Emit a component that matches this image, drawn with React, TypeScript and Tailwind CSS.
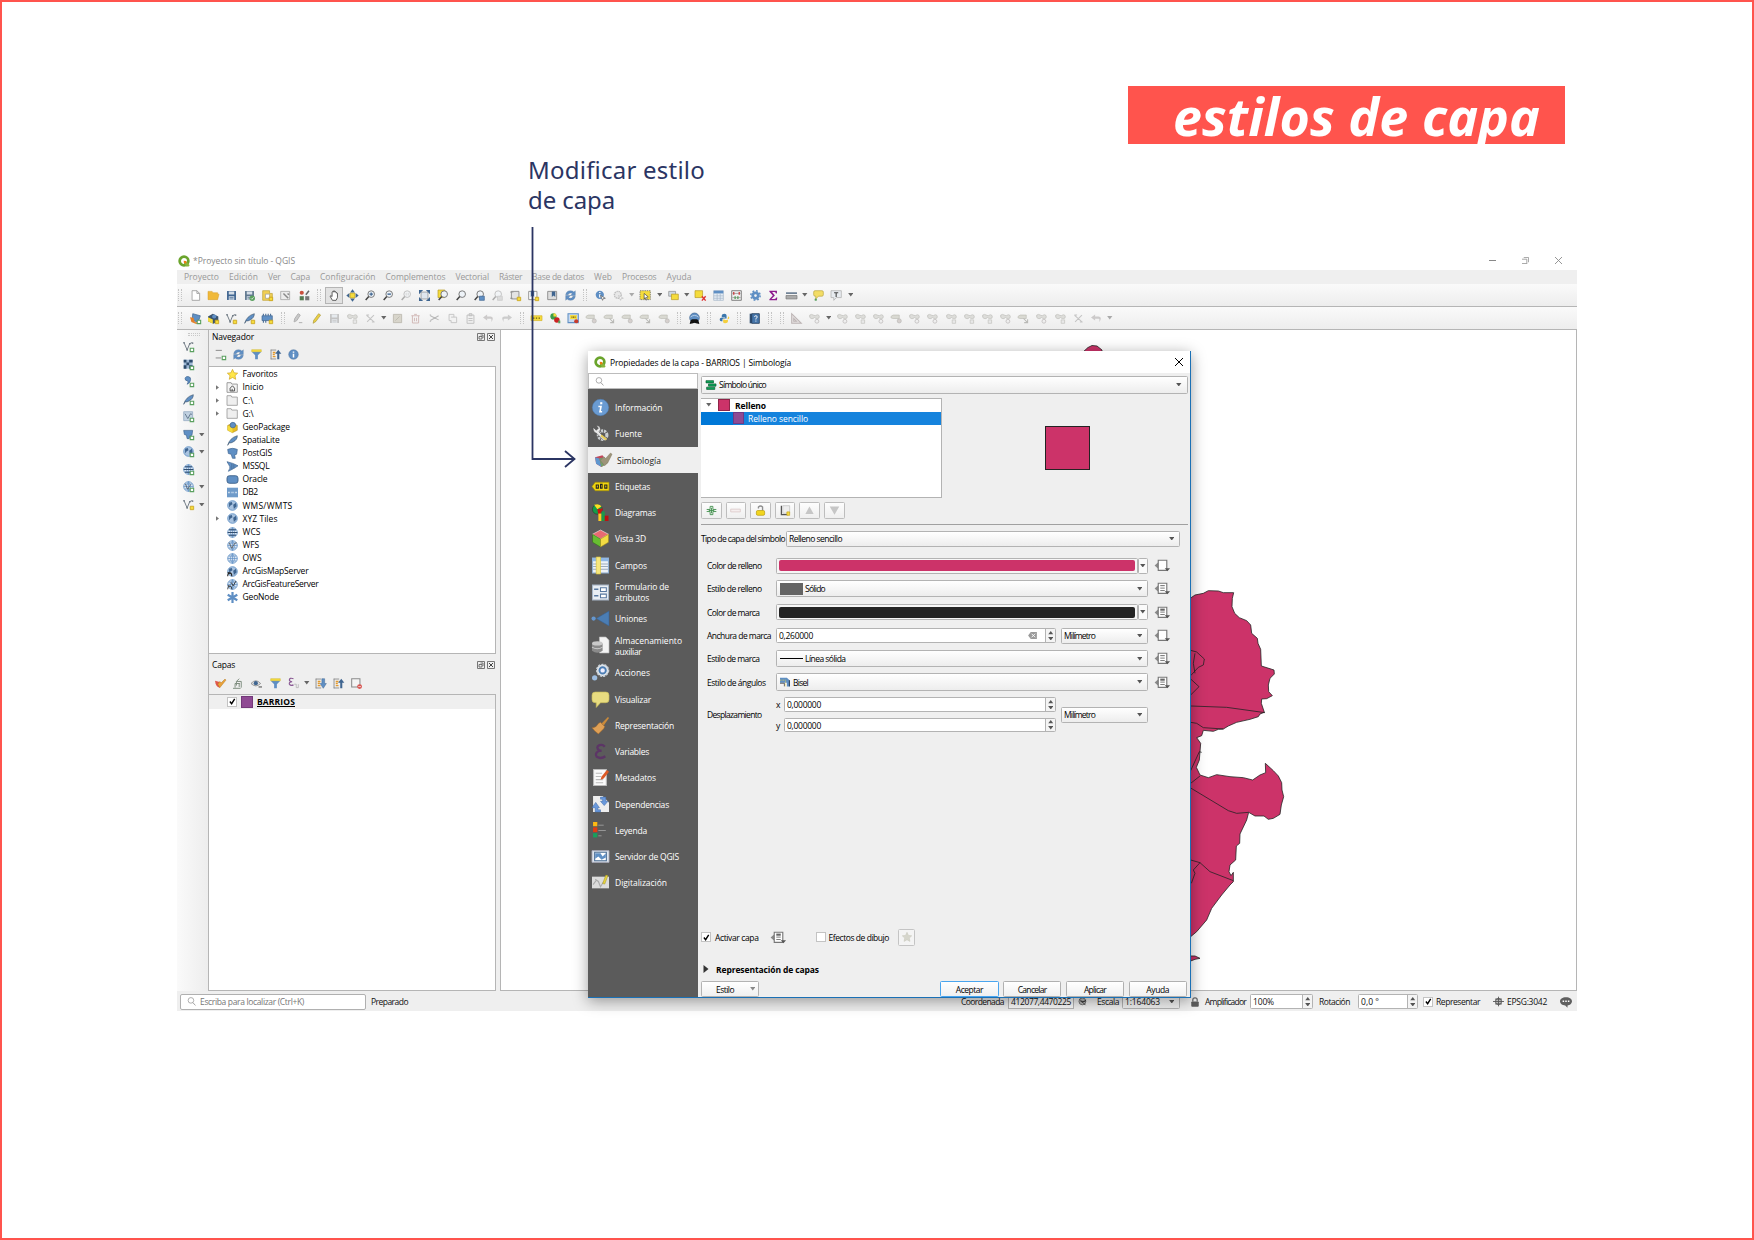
import { useLayoutEffect, useRef, useState, type ReactNode } from 'react';

/* Single-line label whose tracking is adjusted so it spans `w` pixels. */
function T({ w, c = '', children }: { w: number; c?: string; children: string }) {
  const ref = useRef<HTMLSpanElement>(null);
  const [ls, setLs] = useState(0);
  useLayoutEffect(() => {
    const el = ref.current;
    if (el) setLs((w - el.getBoundingClientRect().width) / children.length);
  }, []);
  return (
    <span ref={ref} className={'lbl inline-block shrink-0 whitespace-pre ' + c} style={{ letterSpacing: ls + 'px' }}>
      {children}
    </span>
  );
}

const B = '#5f8fc4';
const D = '#3f6590';
const Y = '#f5dc3c';
const G = '#5aa05f';
const K = '#8a8a8a';

const plus = <path d="M10.5 10.5h5v5h-5z" fill="#fff" stroke={G} strokeWidth="1.6" />;
const plusY = <path d="M10.5 10.5h5v5h-5z" fill={Y} stroke="#c9a31c" strokeWidth="1.2" />;
const lens = (
  <>
    <circle cx="9" cy="6" r="4.8" fill="#eef3f8" stroke="#777" strokeWidth="1.4" />
    <path d="M5.5 9.5L1 14.5" stroke="#444" strokeWidth="2.2" />
  </>
);
const vec = (
  <>
    <path d="M1.500 2.500L6 13L9.500 4.500Q11 1.500 14 3" fill="none" stroke="#66717c" strokeWidth="1.3" />
    <path d="M.5 1.500h2v2h-2zM5 12h2v2h-2zM9 3h2v2h-2zM13 2h2v2h-2z" fill="#66717c" />
  </>
);
const globe = (
  <>
    <circle cx="8" cy="8" r="7" fill="#a9c3e0" stroke={B} strokeWidth="1.2" />
    <path d="M3 4l4-1 1 3-3 2-2 3zM9 7l4-3 1 5-4 4z" fill={D} />
  </>
);
const grid = (
  <>
    <circle cx="8" cy="8" r="7" fill="#dbe6f2" stroke={B} strokeWidth="1.2" />
    <path d="M1 8h14M2.500 4.500h11M2.500 11.500h11M8 1v14M8 1Q2 8 8 15M8 1q6 7 0 14" fill="none" stroke={B} />
  </>
);
const tag = <path d="M0 5l3-2h9v5H3L0 7z" fill="#d9d9d2" stroke="#bdbdb6" />;
const blob = <path d="M1 3q3-2 5 0l3 1 3-1.500q3 0 3 3t-3 2.500q-3 0-4-1.500-2 2.500-5 1.500Q0 7 1 3z" fill="#dddddA" stroke="#bfbfbb" />;
const feather = <path d="M1 15Q4 4 15 1q0 6-6 9-3 2-6 1.500z" fill={B} stroke="#3b536c" strokeWidth=".9" />;
const disk = (c: string) => (
  <>
    <path d="M1.500 1.500h13v13h-13z" fill={c} />
    <path d="M4 2h8v4.500H4zM4 9h8v5.500H4z" fill="#d5dee7" />
    <path d="M5 11h6M5 13h6" stroke={c} />
  </>
);
const funnel = (
  <>
    <path d="M1 4h14L10 9v6H6V9z" fill={B} />
    <path d="M1 1h14v3H1z" fill={Y} stroke="#c7ab1f" strokeWidth=".6" />
  </>
);
const up = <path d="M10.500 15V7H7.500L12 1l4.500 6h-3v8z" fill={D} />;
const list = (
  <>
    <path d="M1 1.500h8M1 14.500h8M1.500 1v14" stroke={K} strokeWidth="1.300" fill="none" />
    <path d="M4 5h4M4 8h3M4 11h4" stroke="#e39a2e" strokeWidth="2" />
  </>
);
const qlogo = (
  <>
    <circle cx="8" cy="8" r="5.800" fill="none" stroke="#6aa42c" strokeWidth="3.600" />
    <path d="M8 8l3 .2 4.500 5.500-1.300 1.600-3.300.1L8 11z" fill="#8ab53c" />
    <path d="M7.600 7.600l3.200.3.500 2.600-1.300.8-2.100-.8z" fill="#ee7913" />
  </>
);
const override = (kind: number) => (
  <>
    <path d="M-.5 8L4 4v8z" fill={K} />
    <path d="M4 1.500h10.500V14H4z" fill="#fff" stroke="#777" strokeWidth="1.400" />
    {kind > 0 && <path d="M6.500 7.500H12M6.500 10.500H12" stroke="#777" strokeWidth="1.200" />}
    {kind > 0 && <path d="M6.500 4.500H12" stroke="#666" strokeWidth={kind > 1 ? '2.600' : '1.200'} />}
    <path d="M12 11.500h6.500l-3.200 3.500z" fill="#555" />
  </>
);

const ICONS: Record<string, ReactNode> = {
  page: <path d="M3 1h7l4 4v10H3zM10 1v4h4" fill="#fff" stroke="#999" strokeWidth="1.200" />,
  folder: <path d="M0 2h6l1 2h7v2h2l-2 8H0z" fill="#f0b93a" stroke="#d69a25" strokeWidth=".7" />,
  save: disk(D),
  saveas: <>{disk('#60788f')}<circle cx="12" cy="12" r="4" fill={G} /><path d="M10 12l1.500 1.500L14 10.500" stroke="#fff" fill="none" /></>,
  layout: <><path d="M1 1h10v4h4v10H1z" fill="#f1cf55" stroke="#bda032" /><path d="M5 6h6v6H5z" fill="#fff" stroke="#999" />{plusY}</>,
  manager: <><path d="M1 2h13v12H1z" fill="#ececec" stroke="#999" /><path d="M5 5l7 7M11 5l2 2" stroke={K} strokeWidth="2.200" /></>,
  style: <><circle cx="4" cy="4" r="3" fill="#c94f3d" /><path d="M1 9h6v6H1z" fill="#557a52" /><path d="M14.500 1L10 7" stroke="#666" strokeWidth="2.200" /><path d="M9 9h6v6H9z" fill="#777" /></>,
  hand: <path d="M5 15L1.500 9q1-1.500 3 .5V3q1-1.500 1.800 0V1.500q1-1 2 0V3q1-1.200 2 0v1.500q1.300-1 2 .2V11l-2 4z" fill="#fff" stroke="#222" />,
  pan: <><path d="M8-1l3.500 4.500h-7zM8 17l3.500-4.500h-7zM-1 8l4.500-3.500v7zM17 8l-4.500-3.500v7z" fill={D} /><path d="M4.500 4.500h7v7h-7z" fill={Y} stroke="#b89b20" /></>,
  zin: <>{lens}<path d="M9 3.500v5M6.500 6h5" stroke={D} strokeWidth="1.800" /></>,
  zout: <>{lens}<path d="M6.500 6h5" stroke={D} strokeWidth="2" /></>,
  zgray: <g opacity=".4">{lens}<path d="M7.500 4v4M10.500 4v4" stroke={K} /></g>,
  extent: <><path d="M3 3h10v10H3z" fill="#dfe6ee" stroke={K} /><path d="M0 0h6L0 6zM16 0v6l-6-6zM0 16v-6l6 6zM16 16h-6l6-6z" fill={D} /></>,
  zsel: <><path d="M0 0h10v11H0z" fill={Y} stroke="#b89b20" />{lens}</>,
  zlayer: lens,
  zlast: <>{lens}<path d="M8 9h7v6H8z" fill={B} stroke={D} /></>,
  znext: <g opacity=".4">{lens}<path d="M8 9h7v6H8z" fill="#bbb" stroke={K} /></g>,
  newmap: <><path d="M2 2h11v11H2z" fill="#e4e4e4" stroke={K} strokeWidth="1.300" /><path d="M0 3h5M0 12h4" stroke={K} />{plusY}</>,
  bookm: <><path d="M1 2h12v12H1z" fill="#fff" stroke={K} strokeWidth="1.300" /><path d="M4 1h5v9l-2.500-2L4 10z" fill={D} />{plusY}</>,
  books: <><path d="M1 2h13v12H1z" fill="#ddd" stroke={K} strokeWidth="1.300" /><path d="M7 2h5v8l-2.500-2L7 10z" fill={D} /></>,
  refresh: <><path d="M1 7q1-6 7-6 3 0 5 2l2-2v7H8l3-3Q6 3 4.500 7zM15 9q-1 6-7 6-3 0-5-2l-2 2V8h7l-3 3q5 3 6.500-2z" fill={B} stroke={D} strokeWidth=".4" /></>,
  identify: <><circle cx="7" cy="7" r="6" fill={B} /><path d="M7 3v1.500M7 6v5" stroke="#fff" strokeWidth="2" /><path d="M8 8l7 4-3 .5L11 15z" fill="#fff" stroke="#555" /></>,
  action: <g opacity=".5"><circle cx="7" cy="7" r="5" fill="#ddd" stroke={K} strokeWidth="2" strokeDasharray="2 1" /><path d="M8 8l7 4-3 .5L11 15z" fill="#fff" stroke={K} /></g>,
  select: <><path d="M0 1h15v13H0z" fill={Y} stroke="#777" strokeDasharray="2 1.300" strokeWidth="1.300" /><path d="M6 5l6 5-2.500.5 1 3.500-2 .5L7.500 11 6 13z" fill="#fff" stroke="#444" /></>,
  selval: <><path d="M1 2h10v7H1z" fill="#cfd9e4" stroke={K} /><path d="M5 6h10v8H5z" fill={Y} stroke="#b89b20" /></>,
  desel: <><path d="M0 1h11v10H0z" fill={Y} stroke="#b89b20" /><path d="M10 9l5.500 6.500M15.500 9L10 15.500" stroke="#d33" strokeWidth="2" /></>,
  table: <><path d="M1 1h14v14H1z" fill="#e6edf5" stroke="#a3b5c8" /><path d="M1 1h14v4H1z" fill={B} /><path d="M1 8.500h14M1 12h14M6 5v10M10.500 5v10" stroke="#a3b5c8" /></>,
  abacus: <><path d="M1 1h14v14H1z" fill="#eee" stroke="#777" strokeWidth="1.300" /><path d="M2 5h12M2 11h12" stroke={K} /><path d="M3 3h2v4H3zM11 3h2v4h-2z" fill="#c44" /><path d="M5 9h2v4H5zM9 9h2v4H9z" fill={G} /></>,
  gear: <><circle cx="8" cy="8" r="4" fill="none" stroke={B} strokeWidth="4" /><circle cx="8" cy="8" r="6.800" fill="none" stroke={B} strokeWidth="2.200" strokeDasharray="2.600 2.740" /></>,
  sigma: <path d="M2 1h11v4h-1.500Q11 3 9 3H6l4 5-5 5h4.500q2 0 2.500-2h1.500L13 15H2v-1.500L7 8 2 2.500z" fill="#8d1a8d" />,
  measure: <><path d="M0 4.500h16" stroke="#3a536f" strokeWidth="1.800" /><path d="M0 8h16v5H0z" fill="#aaa" stroke="#777" /></>,
  tip: <><path d="M3 1h10q2 0 2 2v4q0 2-2 2H8l-4 4V9H3Q1 9 1 7V3q0-2 2-2z" fill="#f3dd67" stroke="#bba640" /><circle cx="4" cy="14" r="1.700" fill={G} /></>,
  text: <><path d="M0 1h15v10H8l-4 4v-4H0z" fill="#e7ebef" stroke="#aaa" /><path d="M4.500 4h6M7.500 4v6" stroke="#444" strokeWidth="1.600" /></>,
  src: <><path d="M4 1l11 3-3 9-9-2z" fill={B} stroke={D} /><path d="M0 6l5 1 2 6 6 1-4 2-7-3z" fill="#e2812b" />{plus}</>,
  gpkg: <><path d="M1 5l7-3.500L15 5v7l-7 3.500L1 12z" fill="#e7bc22" stroke="#a58312" strokeWidth=".7" /><path d="M1 5l7 3.500v7L1 12z" fill={Y} /><circle cx="8.500" cy="4.500" r="4" fill={B} stroke={D} /></>,
  gpkgadd: <><path d="M0 5l7-4 8 4v7l-7 3.500L0 12z" fill="#3a536f" /><path d="M0 6l7 3.500v6L0 12z" fill={Y} /><circle cx="9" cy="5" r="3" fill={B} />{plusY}</>,
  vecY: <>{vec}{plusY}</>,
  vecG: <>{vec}{plus}</>,
  featY: <>{feather}{plusY}</>,
  featG: <>{feather}{plus}</>,
  feather,
  chip: <><path d="M0 4h15v7H0z" fill={B} stroke={D} /><path d="M2 1v3M5.500 1v3M9 1v3M12.500 1v3M2 11v3M5.500 11v3" stroke={D} strokeWidth="1.500" />{plusY}</>,
  pens: <path d="M3 13l1-5 5-7 3 2-5 8zM10 14h5" fill="#c8c8c8" stroke="#b0b0b0" strokeWidth="1.400" />,
  pencil: <path d="M3 15l1-4.500L11 1l3 2-7 9.500z" fill="#e9cf45" stroke="#a08b28" strokeWidth=".8" />,
  gsave: <g opacity=".45">{disk(K)}</g>,
  gblob: <>{blob}<path d="M9 10h5v5H9z" fill="#e8e8e8" stroke="#c2c2be" /></>,
  gtag: <>{tag}<circle cx="12" cy="11.500" r="3" fill="#d6d0ce" stroke="#b9b9b6" /></>,
  gtag2: <>{tag}<path d="M8 8l6 6M14 9v5H9" stroke="#b9b9b6" strokeWidth="1.500" fill="none" /></>,
  gblob2: <>{blob}<circle cx="11.500" cy="12" r="2.800" fill="#eee" stroke="#b9b4b4" /></>,
  gcross: <path d="M2 3l11 10M13 3L3 13M2 3h4M10 13h4" stroke="#c4c4c4" strokeWidth="1.500" fill="none" />,
  gedit: <path d="M2 2h12v12H2zM5 11l6-6" fill="#d8d5cb" stroke="#bdbab0" strokeWidth="1.300" />,
  trash: <path d="M2 4h12M6 2h4M3.500 4v10.500h9V4M6.500 7v5M9.500 7v5" fill="none" stroke="#cfb4b2" strokeWidth="1.300" />,
  cut: <path d="M2 4l12 6M2 11l12-7M1 3h2M1 12h2" stroke="#b9b9b9" strokeWidth="1.500" fill="none" />,
  copy: <path d="M3 2h7v4h4v8H6v-3H3zM6 6h4" fill="#f2f2f2" stroke="#c2c2c2" strokeWidth="1.300" />,
  paste: <path d="M3 3h10v12H3zM6 1h4v3H6zM5 8h6M5 11h6" fill="#f0f0f0" stroke="#bdbdbd" strokeWidth="1.300" />,
  undo: <path d="M6 2L0 6.500 6 11V8.500h5q2 0 1 5 5-8-1-8.500H6z" fill="#cccaca" />,
  redo: <path d="M10 2l6 4.500-6 4.500V8.500H5q-2 0-1 5Q-1 5.500 5 5h5z" fill="#ccc" />,
  abc: <><path d="M0 4h16v7H0z" fill={Y} stroke="#d6b32a" /><path d="M3 7.500h2M7 7.500h2M11 7.500h2" stroke="#6c5a10" strokeWidth="2" /></>,
  diag: <><circle cx="5" cy="5" r="4.500" fill="#3a9d4a" /><path d="M5 5V.5A4.500 4.500 0 019.500 5z" fill={Y} /><circle cx="10" cy="10" r="4" fill="#c22" /><path d="M12 11h3v4h-3z" fill={G} /></>,
  abcmap: <><path d="M0 1h15v13H0z" fill="#c8daf0" stroke={B} strokeWidth="1.500" /><path d="M3 3h10v6H3z" fill={Y} /><path d="M5 6h6" stroke="#6c5a10" strokeWidth="1.500" strokeDasharray="1.500 .8" /><circle cx="12" cy="12" r="3" fill="#c93a2b" /></>,
  bino: <><circle cx="8" cy="7" r="7" fill={B} stroke={D} /><path d="M2 6q6-5 12 0" stroke="#dbe6f2" fill="none" /><path d="M1 16q1-7 4-7h6q3 0 4 7l-5-1q-2-2-4 0z" fill="#111" /></>,
  python: <><path d="M8 1Q4 1 4 3.500V6h5v1H3Q1 7 1 9.500T3 12h2V9.500Q5 8 7 8h4V3.500Q11 1 8 1z" fill="#3b77ad" /><path d="M9 15q4 0 4-2.500V10H8V9h5q2 0 2-2t-2-2v2q0 2-2 2H7q-1 0-1 1.500V13q0 2 3 2z" fill="#f4cf3e" /></>,
  help: <><path d="M1 1h14v14H1z" fill="#2f4d70" /><path d="M4 1h11v14H4z" fill="#4676ab" stroke="#243c58" /><path d="M8 5.500q0-1.500 2-1.500t2 2q0 1-2 2v1.500M10 11v1.500" stroke="#fff" strokeWidth="1.300" fill="none" /></>,
  tri: <path d="M1 1v14h14zM4 8v4h4z" fill="#e4e0e0" stroke="#bcb4b4" strokeWidth="1.500" />,
  raster: <><path d="M1 1h13v13H1z" fill="#9fb9d6" /><path d="M1 1h4v4H1zM9 1h5v4H9zM5 5h4v4H5zM1 9h4v5H1zM9 9h5v5H9z" fill="#2c4a6b" />{plus}</>,
  comma: <><path d="M5 1q6-1 6 4 0 5-5 7 2-3 1-5-4 0-4-3 0-2 2-3z" fill={B} stroke={D} />{plus}</>,
  vlayer: <><path d="M1 1h13v13H1z" fill="#c2d2e2" stroke="#8ea5bd" /><path d="M3 4l4 7 4-7 2 1" stroke="#5c7186" fill="none" strokeWidth="1.300" />{plus}</>,
  pgadd: <><path d="M1 2h13l-1 7-3 1-1 4H6L5 9 2 8z" fill={B} stroke={D} />{plus}</>,
  globeadd: <>{globe}{plus}</>,
  gridadd: <>{grid}<path d="M1 8h14M3 4h10M3 12h10" stroke="#314e70" strokeWidth="1.600" />{plus}</>,
  wfsadd: <>{grid}<path d="M3 4l4 8 4-7" stroke="#555" fill="none" />{plus}</>,
  star: <path d="M8 .5l2.300 5 5.200.6-3.900 3.600 1.100 5.300L8 12.300 3.300 15l1.100-5.300L.5 6.100l5.200-.6z" fill="#ffe649" stroke="#cfa522" />,
  home: <><path d="M0 1h6l1 2h8v12H0z" fill="#f4f4f4" stroke={K} strokeWidth="1.200" /><path d="M8 5.500L4.500 9v4h6.500V9z" fill="none" stroke="#444" strokeWidth="1.300" /><path d="M7.500 10v3" stroke="#444" strokeWidth="1.300" /></>,
  dir: <path d="M0 1h6l1 2h8v12H0z" fill="#efefef" stroke="#999" strokeWidth="1.200" />,
  pg: <path d="M1 2Q8-1 15 2l-1 7-3 1 1 5H8L6 9 2 8z" fill={B} stroke={D} />,
  ms: <><path d="M0 1q9 2 16 6Q10 11 2 15q3-5 2-7T0 1z" fill={B} stroke={D} /><path d="M7 4v8M10 5v6" stroke={D} fill="none" /></>,
  oracle: <rect x="0" y="2.500" width="16" height="11" rx="3.500" fill={B} stroke="#3c5f88" strokeWidth="1.300" />,
  db2: <><path d="M0 1h16v14H0z" fill="#6f9bca" /><path d="M1.500 8h3M6.500 8h3M11.500 8h3" stroke="#dce8f5" strokeWidth="2.500" strokeDasharray="1.200 .6" /></>,
  globe,
  grid,
  wcs: <>{grid}<path d="M1 8h14M3 4h10M3 12h10" stroke="#314e70" strokeWidth="1.800" /></>,
  wfs: <>{grid}<path d="M3 4l4 8 4-7 3-1" stroke="#666" fill="none" strokeWidth="1.300" /></>,
  arc: <>{globe}<path d="M1 15q0-5 3-5t3 5M1 9l3 2" stroke="#222" fill="none" strokeWidth="1.500" /></>,
  arcf: <>{grid}<path d="M1 15q0-5 3-5t3 5M1 9l3 2M6 5l3 5 4-7" stroke="#333" fill="none" strokeWidth="1.300" /></>,
  node: <path d="M8 0v16M1 4l14 8M15 4L1 12" stroke={B} strokeWidth="3.200" />,
  addlay: <><path d="M1 2h9M1 13h8" stroke={K} strokeWidth="1.400" />{plus}</>,
  funnel,
  tree: <>{list}{up}</>,
  expand: <>{list}<path d="M10 1h4v7h2.500L12 15 7.500 8H10z" fill={B} stroke={D} strokeWidth=".7" /></>,
  info: <><circle cx="8" cy="8" r="7" fill={B} stroke={D} strokeWidth=".6" /><path d="M8 3.500v2M8 7v5.500" stroke="#fff" strokeWidth="2.200" /></>,
  brush: <><path d="M0 4l8 2-1 8Q1 13 0 4z" fill="#e0574b" /><path d="M4 9l3 5L16 3l-1.500-1.500L9 7 7 5z" fill="#e9a23a" stroke="#a8701c" strokeWidth=".6" /></>,
  group: <path d="M0 15h11M3 14V8h7M5 11V5h7v9M5 5l4-4M9 8v5" fill="none" stroke="#7d8b7e" strokeWidth="1.400" />,
  eye: <><path d="M0 8q7-8 14 0-7 7-14 0z" fill="#ddd" stroke="#777" /><circle cx="7" cy="7.500" r="3" fill={D} /><path d="M11 13h5" stroke="#777" strokeWidth="2" /></>,
  eps: <><path d="M8 1Q2-1 2 3q0 2 4 2.500Q1 6 2 9q2 3 6 1" fill="none" stroke="#8a5a94" strokeWidth="1.700" /><path d="M9 9h3v5h3v-5" stroke="#aaa" fill="none" /></>,
  remove: <><path d="M1 1h12v12H1z" fill="#f4f4f4" stroke={K} strokeWidth="1.500" /><circle cx="12.500" cy="12.500" r="3.500" fill="#d9534f" /><path d="M10.500 12.500h4" stroke="#fff" /></>,
  search: <><circle cx="7" cy="6" r="5" fill="none" stroke={K} strokeWidth="1.200" /><path d="M10.500 10L15 15" stroke={K} strokeWidth="1.400" /></>,
  qgis: qlogo,
  bigInfo: <><circle cx="8" cy="8" r="7.700" fill="#6a9bd2" stroke="#4e7fb8" strokeWidth=".5" /><path d="M8.700 3v2" stroke="#fff" strokeWidth="2" /><path d="M6 7h2.500l-1 5h2" fill="none" stroke="#fff" strokeWidth="1.500" /></>,
  wrench: <><circle cx="10" cy="9.500" r="4" fill="none" stroke="#c9cdd0" strokeWidth="3" strokeDasharray="2 .8" /><path d="M1 2l3 3 2-2L4 .5q4 0 4 4l-1.500 2L13 13l-1.500 2L4.500 8Q1 7 1 2z" fill="#e8e8e8" stroke="#444" strokeWidth=".5" /><path d="M9 9l5 4-1 1.500-5-4z" fill="#e5cb57" /></>,
  symb: <><path d="M1 5l7-2 5 7-6 4-5-3z" fill="#c3485a" /><path d="M1 5l4 1 2 8-5-3z" fill="#5f97cf" /><path d="M5 6l5-1 3 5-6 4z" fill="#72a16b" /><path d="M6 8l4 5 3-3 4-8-1.500-1-4.500 5-2-1.500z" fill="#9d9479" stroke="#7b735d" strokeWidth=".4" /></>,
  label: <><path d="M0 8l3-4h13v8H3z" fill="#f2d60f" stroke="#a08c00" strokeWidth=".6" /><path d="M4 6.500h2v3H4zM8 6h1.500v3.500H8zM12 6.500h2v3h-2z" fill="none" stroke="#222" /></>,
  bigDiag: <><circle cx="5" cy="5" r="4.600" fill="#149c4a" stroke="#222" strokeWidth=".4" /><path d="M5 5L2 .8Q6-1 9 2z" fill="#ffdd22" /><path d="M5 5l5-1q0 4-4 6z" fill="#c11" /><path d="M6 9h3v7H6z" fill="#fc2" /><path d="M9 7h3v9H9z" fill="#1a9b49" /><path d="M12 11h3.500v5H12z" fill="#b11" /></>,
  cube: <><path d="M8 0l7.500 4L8 8.500.5 4z" fill="#e96a72" stroke="#fff" strokeWidth=".5" /><path d="M.5 4L8 8.500V16L.5 11.500z" fill="#68bd32" stroke="#2d6a14" strokeWidth=".5" /><path d="M15.500 4L8 8.500V16l7.500-4.500z" fill="#f4dc43" stroke="#a08e1b" strokeWidth=".5" /></>,
  fields: <><path d="M.5 1h15v14H.5z" fill="#eef3f8" stroke="#8fb0d4" /><path d="M.5 1h15v3H.5z" fill="#8fb8e6" /><path d="M1 6.500h14M1 9h14M1 11.500h14" stroke="#9aabbc" /><path d="M4 0h4v16H4z" fill="#f7e77c" stroke="#d8c23a" strokeWidth=".6" /></>,
  form: <><path d="M.5 1h15v14H.5z" fill="#e9eef4" stroke="#a7b6c8" /><path d="M8 3.500h5.500V7H8zM8 9.500h5.500V13H8z" fill="#fff" stroke="#5878a0" /><path d="M2 5h4M2 11h4" stroke="#5878a0" strokeWidth="1.400" /></>,
  join: <><circle cx="1.500" cy="8" r="2" fill="#6597cf" /><path d="M4 8L16 1v14z" fill="#4b7db3" stroke="#356194" strokeWidth=".5" /></>,
  aux: <><path d="M7 0h6l3 3v12H7z" fill="#f4f4f4" stroke="#bbb" strokeWidth=".6" /><path d="M0 6v7q5 3.500 10 0V6z" fill="#8a8a8a" /><ellipse cx="5" cy="6" rx="5" ry="2" fill="#c9c9c9" /><path d="M0 9.500q5 3 10 0" stroke="#ccc" fill="none" /></>,
  actions: <><circle cx="10" cy="6" r="5.500" fill="#e6eaee" stroke="#c9d0d7" strokeWidth="1.500" strokeDasharray="2 1" /><circle cx="10" cy="6" r="3" fill="#eef" stroke="#4b7db3" strokeWidth="1.800" /><circle cx="2.500" cy="13" r="2.500" fill="#9dbde0" /></>,
  bubble: <path d="M3 1h10q3 0 3 3v4q0 3-3 3H8l-4 4.500V11H3Q0 11 0 8V4q0-3 3-3z" fill="#e8dc80" stroke="#c8bb58" strokeWidth=".6" />,
  broom: <><path d="M15 0l1 1-5 7-2-2z" fill="#c98a3b" /><path d="M8 5l4 4-1 2-5 5Q2 13 0 10q4 0 6-4z" fill="#dfa056" stroke="#9c6526" strokeWidth=".5" /></>,
  varE: <path d="M12 3.500Q10 1 7 2 3 4 7 7.300h2H7Q2 9.500 4.500 13q4 2.500 8-.5" fill="none" stroke="#5c3566" strokeWidth="2.200" />,
  meta: <><path d="M1.500.5h12v15h-12z" fill="#fafafa" stroke="#bbb" /><path d="M3.500 4h6M3.500 7h5M3.500 10h7M3.500 13h7" stroke="#bbb" /><path d="M8 10l1-3 5-6 2 1.500-5 6.500z" fill="#dd5a26" /></>,
  deps: <><path d="M1 0h9l6 6v9H1z" fill="#eee" /><path d="M8 1h5v4h2l-3.500 4L8 5h2V3H8zM8 15H3v-4H0l3.500-5L7 11H5.500v2H8z" fill="#6a99dc" stroke="#3e6aa8" strokeWidth=".5" /></>,
  legend: <><path d="M1 0h4v4H1z" fill="#fdb913" /><path d="M1 5h4v4.500H1z" fill="#e03c14" /><path d="M1 10.500h4v4H1z" fill="#17a05c" /><path d="M6 3h5M6 8h7M6 13h3" stroke="#999" strokeWidth=".9" /></>,
  server: <><path d="M0 2.500h16v11H0z" fill="#dfe6ee" stroke="#aab" strokeWidth=".8" /><path d="M2.500 4h11v8h-11z" fill="#fff" stroke="#4a6c93" /><path d="M3 5h5l2 3 3-3v4l-4 2-3-3-3 2z" fill="#5f8fc4" /></>,
  digit: <><path d="M0 2.500h16v11H0z" fill="#dcdcdc" /><path d="M3 5l3 2 2 5 3-5M1 10l3-4" stroke="#aaa" fill="none" /><path d="M10 9l3-8 2 .5-3 8z" fill="#e6d33c" stroke="#94861e" strokeWidth=".4" /></>,
  single: <path d="M0 1h12v3.600H0zM4 6.200h12v3.600H4zM1 11.400h13V15H1z" fill="#0fa558" stroke="#0a5c33" strokeWidth="1.100" />,
  addG: <path d="M1 6.500h5M1 9.500h5M6 6.500V2h4v4.500h5M6 9.500V14h4V9.500h5M8 4v8M4 8h8" fill="none" stroke="#3f8f4b" strokeWidth="1.300" />,
  minusG: <path d="M1 6h14v4H1z" fill="#f5eeee" stroke="#dcc9c9" strokeWidth="1.200" />,
  lockY: <><path d="M5 5V3q3-3 6 0v5" fill="none" stroke="#8f8f8f" strokeWidth="2" /><rect x="2" y="8" width="12" height="7" rx="2" fill="#f2d51e" stroke="#b79b0c" /></>,
  dup: <><path d="M2 1v13h9" fill="none" stroke="#555" strokeWidth="1.800" /><path d="M4 1h10v11H4z" fill="#eee" stroke="#aaa" strokeWidth=".7" /><path d="M10 10h4v5h-4z" fill={Y} stroke="#c9a31c" /></>,
  upG: <path d="M8 2l6 11H2z" fill="#c6c6c6" />,
  downG: <path d="M8 14L1 2h14z" fill="#c6c6c6" />,
  bevel: <><path d="M0 1h11l5 5v9h-5V9H0z" fill="#5f8fc4" /><path d="M0 5h9v10" fill="none" stroke={Y} strokeDasharray="1.500 1" /><path d="M0 10h7v5M15 5v10" fill="none" stroke="#111" /></>,
  starG: <path d="M8 .5l2.300 5 5.200.6-3.900 3.600 1.100 5.300L8 12.300 3.300 15l1.100-5.300L.5 6.100l5.200-.6z" fill="#d6d6cc" stroke="#cacabf" />,
  mapCoord: <><circle cx="7" cy="7" r="5.500" fill="#bbb" stroke="#444" /><path d="M3 4l9 9M6 9l7-4M4 7h8" stroke="#333" strokeWidth="1.300" /></>,
  padlock: <><path d="M4.500 7V4.500q0-3 3.500-3t3.500 3V7" fill="none" stroke="#666" strokeWidth="2" /><rect x="2" y="7" width="12" height="8.500" rx="1.500" fill="#5d5d5d" /></>,
  crs: <><circle cx="8" cy="8" r="4.500" fill="#bbb" stroke="#555" strokeWidth="1.300" /><path d="M0 8h16M8 1v14M3 4.500h10M3 11.500h10" stroke="#555" strokeWidth="1.300" /></>,
  msg: <><path d="M8 1.500c5 0 8 2.500 8 5.500s-3 5.500-6 5.500L10 15.500 7 12.500C3 12.500 0 10 0 7s3-5.500 8-5.500z" fill="#5f5f5f" /><path d="M3.500 7h2M7 7h2M10.500 7h2" stroke="#fff" strokeWidth="1.700" /></>,
  ov0: override(0),
  ov1: override(1),
  ov2: override(2),
};

function Ic({ n, c = 'size-3' }: { n: string; c?: string }) {
  return (
    <svg viewBox="0 0 16 16" className={'block shrink-0 overflow-visible ' + c}>
      {ICONS[n]}
    </svg>
  );
}

const Arrow = ({ c = 'text-[#666]' }: { c?: string }) => (
  <svg viewBox="0 0 6 4" className={'block h-[3.500px] w-[5.500px] shrink-0 ' + c}>
    <path d="M0 0h6L3 4z" fill="currentColor" />
  </svg>
);

function Bar({ items }: { items: string }) {
  return (
    <>
      {items.split(' ').map((k, i) => {
        if (k === '|')
          return (
            <span key={i} className="flex w-[12px] shrink-0 justify-center">
              <span className="h-[12px] w-[4px] border-x border-dotted border-[#c4c4c4]" />
            </span>
          );
        if (k === 'v' || k === 'V')
          return (
            <span key={i} className="flex w-[9.200px] shrink-0 justify-center">
              <Arrow c={k === 'v' ? 'text-[#666]' : 'text-[#aaa]'} />
            </span>
          );
        return (
          <span
            key={i}
            className={
              'flex h-[17px] w-[18.170px] shrink-0 items-center justify-center ' +
              (k === 'hand' ? 'border border-[#b5b5b5] bg-[#e2e2e2]' : '')
            }
          >
            <Ic n={k} c="size-[11px]" />
          </span>
        );
      })}
    </>
  );
}

const MENU: [string, number][] = [
  ['Proyecto', 35], ['Edición', 29], ['Ver', 12.500], ['Capa', 19.500], ['Configuración', 55.500], ['Complementos', 60],
  ['Vectorial', 33.500], ['Ráster', 23], ['Base de datos', 52], ['Web', 18], ['Procesos', 34.500], ['Ayuda', 25],
];

const TREE: [string, string, number, boolean?][] = [
  ['star', 'Favoritos', 35], ['home', 'Inicio', 21, true], ['dir', 'C:\\', 11, true], ['dir', 'G:\\', 11, true],
  ['gpkg', 'GeoPackage', 47.500], ['feather', 'SpatiaLite', 37], ['pg', 'PostGIS', 29.500], ['ms', 'MSSQL', 27],
  ['oracle', 'Oracle', 25], ['db2', 'DB2', 15], ['globe', 'WMS/WMTS', 50], ['globe', 'XYZ Tiles', 35, true],
  ['wcs', 'WCS', 18], ['wfs', 'WFS', 16.500], ['grid', 'OWS', 19], ['arc', 'ArcGisMapServer', 66],
  ['arcf', 'ArcGisFeatureServer', 76], ['node', 'GeoNode', 36.500],
];

const SIDE: [string, string, number, string?, number?][] = [
  ['bigInfo', 'Información', 47.500], ['wrench', 'Fuente', 27], ['symb', 'Simbología', 44], ['label', 'Etiquetas', 35],
  ['bigDiag', 'Diagramas', 41], ['cube', 'Vista 3D', 31], ['fields', 'Campos', 32], ['form', 'Formulario de', 54, 'atributos', 34],
  ['join', 'Uniones', 32], ['aux', 'Almacenamiento', 67, 'auxiliar', 26.500], ['actions', 'Acciones', 35],
  ['bubble', 'Visualizar', 36], ['broom', 'Representación', 59], ['varE', 'Variables', 34], ['meta', 'Metadatos', 41],
  ['deps', 'Dependencias', 54], ['legend', 'Leyenda', 32], ['server', 'Servidor de QGIS', 64], ['digit', 'Digitalización', 52],
];

const STRIP: [string, boolean][] = [
  ['vecG', false], ['raster', false], ['comma', false], ['featG', false], ['vlayer', false],
  ['pgadd', true], ['globeadd', true], ['gridadd', false], ['wfsadd', true], ['vecY', true],
];

const PanelHead = ({ title, w }: { title: string; w: number }) => (
  <div className="flex h-[14px] items-center pr-[5px] pl-[3px] text-black">
    <T w={w}>{title}</T>
    <span className="ml-auto flex gap-[2px]">
      {[0, 1].map((i) => (
        <svg key={i} viewBox="0 0 8 8" className="size-[8px]">
          <path d="M.5.5h7v7h-7z" fill="none" stroke="#777" />
          {i ? <path d="M2 2l4 4M6 2L2 6" stroke="#444" /> : <path d="M2 3.500h3V6H2zM3.500 2H6v3" stroke="#555" strokeWidth=".8" fill="none" />}
        </svg>
      ))}
    </span>
  </div>
);

const Check = ({ on, c = 'size-[10px]' }: { on?: boolean; c?: string }) => (
  <span className={'flex shrink-0 items-center justify-center border border-[#c3c3c3] bg-white ' + c}>
    {on && (
      <svg viewBox="0 0 8 8" className="size-[7px]">
        <path d="M1 4l2 2.500L6.500 1" fill="none" stroke="#000" strokeWidth="1.600" />
      </svg>
    )}
  </span>
);

const Combo = ({ c, children }: { c: string; children: ReactNode }) => (
  <span className={'flex shrink-0 items-center rounded-[1.500px] border border-[#b3b3b3] bg-linear-to-b from-white to-[#ededed] pr-[5px] ' + c}>
    {children}
    <span className="ml-auto"><Arrow c="text-[#555]" /></span>
  </span>
);

const Spin = ({ c, children }: { c: string; children: ReactNode }) => (
  <span className={'flex shrink-0 items-center rounded-[1.500px] border border-[#b3b3b3] bg-white pl-[2px] ' + c}>
    {children}
    <span className="flex h-full w-[10px] flex-col items-center justify-center gap-[2.500px] border-l border-[#b3b3b3] bg-[#f4f4f4]">
      <span className="rotate-180"><Arrow c="text-[#555]" /></span>
      <Arrow c="text-[#555]" />
    </span>
  </span>
);

const Row = ({ label, w, ov, children }: { label: string; w: number; ov?: string; children: ReactNode }) => (
  <div className="flex h-[23.300px] items-center pl-[6px]">
    <span className="w-[69px] shrink-0"><T w={w}>{label}</T></span>
    {children}
    {ov && <Ic n={ov} c="ml-[7px] size-[13px]" />}
  </div>
);

const ColorBtn = ({ c }: { c: string }) => (
  <>
    <span className="flex h-[16px] w-[362px] items-center rounded-[1.500px] border border-[#b3b3b3] bg-[#f6f6f6] px-[2px]">
      <span className={'h-[11px] w-full rounded-[2px] ' + c} />
    </span>
    <span className="flex h-[16px] w-[10px] items-center justify-center rounded-[1.500px] border border-[#b3b3b3] bg-[#fafafa]">
      <Arrow c="text-[#555]" />
    </span>
  </>
);

const Btn = ({ w, c = 'border-[#b0b0b0]', children }: { w: number; c?: string; children: string }) => (
  <span className={'flex h-[16px] w-[58.500px] items-center justify-center rounded-[1.500px] border bg-linear-to-b from-white to-[#f0f0f0] ' + c}>
    <T w={w}>{children}</T>
  </span>
);

function Dialog() {
  return (
    <div className="absolute top-[21px] left-[87px] flex h-[647px] w-[603px] flex-col border-r border-b border-[#1a70b5] bg-[#efefef] text-black shadow-[0_3px_14px_rgba(0,0,0,0.38)] [&_.lbl]:pt-[1.500px]">
      <div className="flex h-[22px] shrink-0 items-center bg-white pr-[7px] pl-[6px]">
        <Ic n="qgis" />
        <T w={181} c="ml-[4px]">Propiedades de la capa - BARRIOS | Simbología</T>
        <svg viewBox="0 0 8 8" className="ml-auto size-2"><path d="M0 0l8 8M8 0L0 8" stroke="#000" /></svg>
      </div>
      <div className="flex min-h-0 flex-1">
        <div className="flex w-[110px] shrink-0 flex-col bg-[#5b5b5b] text-white">
          <div className="mb-[5.500px] flex h-[16px] shrink-0 items-center border border-[#bcbcbc] bg-white pl-[6px]">
            <Ic n="search" c="size-[9px]" />
          </div>
          {SIDE.map(([ic, a, w, b, w2]) => (
            <div
              key={a}
              className={
                'flex shrink-0 items-center ' +
                (b ? 'h-[27.600px] ' : 'h-[26.250px] ') +
                (ic === 'symb' ? 'bg-[#efefef] pl-[6px] text-[#222]' : 'pl-[4px]')
              }
            >
              <Ic n={ic} c="size-[17px]" />
              <span className="ml-[6px] flex flex-col items-start gap-px">
                <T w={w}>{a}</T>
                {b && w2 && <T w={w2}>{b}</T>}
              </span>
            </div>
          ))}
        </div>
        <div className="flex w-[492px] flex-col pt-[2.500px] pl-[3px]">
          <Combo c="h-[18px] w-[486.500px] pl-[4px]">
            <Ic n="single" c="size-[10px]" />
            <T w={47} c="ml-[3px]">Símbolo único</T>
          </Combo>
          <div className="mt-[4px] flex">
            <div className="h-[100px] w-[241px] border border-l-0 border-[#b3b3b3] bg-white">
              <div className="flex h-[13px] items-center pl-[5px]">
                <Arrow />
                <span className="ml-[6.500px] size-[12px] border border-[#8e2448] bg-[#cc3369]" />
                <T w={31} c="ml-[5px] font-bold">Relleno</T>
              </div>
              <div className="flex h-[13px] bg-[#1583dd]">
                <span className="w-[32px] bg-[#0078d7]" />
                <span className="h-[12px] w-[11px] border border-[#6e3a86] bg-[#8f4a93]" />
                <T w={60} c="ml-[4px] leading-[12px] text-white">Relleno sencillo</T>
              </div>
            </div>
            <span className="mt-[28px] ml-[103px] size-[44.500px] border border-[#232323] bg-[#cc3369]" />
          </div>
          <div className="mt-[4px] flex gap-[4px]">
            {['addG', 'minusG', 'lockY', 'dup', 'upG', 'downG'].map((n) => (
              <span key={n} className="flex h-[17px] w-[20.600px] items-center justify-center rounded-[1.500px] border border-[#bdbdbd] bg-linear-to-b from-[#fdfdfd] to-[#efefef]">
                <Ic n={n} c="size-[11px]" />
              </span>
            ))}
          </div>
          <div className="mt-[5px] h-px w-[487px] shrink-0 bg-[#a0a0a0]" />
          <div className="mt-[6px] flex items-center">
            <T w={84} c="mr-[1px]">Tipo de capa del símbolo</T>
            <Combo c="h-[16px] w-[394px] pl-[2px]"><T w={53}>Relleno sencillo</T></Combo>
          </div>
          <div className="mt-[7.500px] flex flex-col">
            <Row label="Color de relleno" w={54.500} ov="ov0"><ColorBtn c="bg-[#cc3369]" /></Row>
            <Row label="Estilo de relleno" w={54.500} ov="ov1">
              <Combo c="h-[17px] w-[372px] pl-[3px]">
                <span className="mr-[2px] h-[12px] w-[23px] bg-[#646464]" /><T w={20}>Sólido</T>
              </Combo>
            </Row>
            <Row label="Color de marca" w={52.500} ov="ov2"><ColorBtn c="bg-[#232323]" /></Row>
            <Row label="Anchura de marca" w={64} ov="ov0">
              <Spin c="h-[15px] w-[280px]">
                <T w={34}>0,260000</T>
                <svg viewBox="0 0 10 8" className="mr-[8px] ml-auto h-[7px] w-[9px]">
                  <path d="M3 0h7v8H3L0 4z" fill="#9a9a9a" /><path d="M4 2l4 4M8 2L4 6" stroke="#fff" />
                </svg>
              </Spin>
              <Combo c="ml-[5px] h-[16px] w-[87px] pl-[2px]"><T w={31}>Milímetro</T></Combo>
            </Row>
            <Row label="Estilo de marca" w={52.500} ov="ov1">
              <Combo c="h-[17px] w-[372px] pl-[3px]">
                <span className="mr-[2px] h-px w-[23px] bg-black" /><T w={40.500}>Línea sólida</T>
              </Combo>
            </Row>
            <Row label="Estilo de ángulos" w={58.500} ov="ov2">
              <Combo c="h-[17.500px] w-[372px] pl-[3px]">
                <Ic n="bevel" c="mr-[3px] size-[10px]" /><T w={15}>Bisel</T>
              </Combo>
            </Row>
          </div>
          <div className="mt-[2px] flex h-[38px] items-center pl-[6px]">
            <span className="w-[69px] shrink-0"><T w={54.500}>Desplazamiento</T></span>
            <div className="flex flex-col gap-[6px]">
              {['x', 'y'].map((a) => (
                <div key={a} className="flex items-center">
                  <span className="w-[8px] pt-[2px]">{a}</span>
                  <Spin c="h-[14.500px] w-[272px]"><T w={34}>0,000000</T><span className="ml-auto" /></Spin>
                </div>
              ))}
            </div>
            <Combo c="ml-[5px] h-[16px] w-[87px] pl-[2px]"><T w={31}>Milímetro</T></Combo>
          </div>
          <div className="mt-auto flex h-[18px] items-center">
            <Check on /><T w={43.500} c="ml-[4px]">Activar capa</T>
            <Ic n="ov2" c="ml-[12px] size-[13px]" />
            <Check c="ml-[32px] size-[10px]" /><T w={60.500} c="ml-[3px]">Efectos de dibujo</T>
            <span className="ml-[9px] flex size-[17px] items-center justify-center rounded-[1.500px] border border-[#c4c4c4] bg-[#f4f4f4]"><Ic n="starG" c="size-[10px]" /></span>
          </div>
          <div className="mt-[17px] flex h-[12px] items-center pl-[2px]">
            <svg viewBox="0 0 6 8" className="h-2 w-[6px]"><path d="M.5 0l5 4-5 4z" fill="#333" /></svg>
            <T w={103} c="ml-[7px] font-bold">Representación de capas</T>
          </div>
          <div className="mt-[6px] flex gap-[4.300px]">
            <span className="mr-auto flex h-[16px] w-[58px] items-center rounded-[1.500px] border border-[#b3b3b3] bg-linear-to-b from-white to-[#f0f0f0] pr-[3px] pl-[14px]">
              <T w={18}>Estilo</T><span className="ml-auto"><Arrow c="text-[#888]" /></span>
            </span>
            <Btn w={27} c="border-[#4aa5ee]">Aceptar</Btn>
            <Btn w={29}>Cancelar</Btn>
            <Btn w={22}>Aplicar</Btn>
            <Btn w={23} c="mr-[3px] border-[#b0b0b0]">Ayuda</Btn>
          </div>
        </div>
      </div>
    </div>
  );
}

function MapView() {
  return (
    <div className="relative h-[661px] flex-1 border-x border-b border-[#b5b5b5] bg-white">
      <svg viewBox="501 330 1075 660" className="block h-[660px] w-[1075px]">
        <g fill="#cc3369" stroke="#232323" strokeWidth="2.400" strokeLinejoin="round">
          <g transform="translate(1150 560) scale(.33333)">
            <path d="M110 120L122 114 135 105 160 100 175 92 205 93 220 98 251 98 247 115 246 140 254 160 268 173 290 182 302 195 305 220 322 235 324 250 332 268 334 318 372 330 373 342 360 355 355 375 356 395 367 407 350 416 335 417 334 430 343 457 330 462 325 470 300 478 260 487 235 498 220 507 205 508 190 514 160 511 155 527 140 533 152 550 150 575 148 600 139 622 150 645 175 653 200 644 240 650 280 653 308 660 330 645 347 638 346 610 370 632 385 648 395 668 396 690 401 710 394 735 390 763 370 775 355 778 342 768 315 768 296 757 290 780 270 822 269 850 259 858 257 900 240 915 237 935 243 947 250 937 250 965 240 975 215 1005 185 1045 170 1080 140 1115 122 1130 110 1130Z" />
            <path
              fill="none"
              d="M122 438L230 442 345 458M122 487L140 490 160 503 220 507M122 271L140 276 163 297 160 315 145 322 122 347M135 280L130 310 135 340M122 357L147 380 122 405M122 632L148 575 155 577M122 670L150 648M122 684L235 752 260 760 296 757M122 900L150 908 180 935 250 962M150 908L130 930 135 940 124 970"
            />
            <path d="M110 1188L135 1188 150 1195 135 1198 122 1203Z" />
          </g>
          <path strokeWidth=".8" d="M1083 352L1088 347.500 1092 345.500 1097 346 1102 350V353Z" />
        </g>
      </svg>
      <Dialog />
    </div>
  );
}

export default function App() {
  return (
    <main className="relative h-[1240px] w-[1754px] overflow-hidden border-2 border-[#ff544d] bg-white font-['Open_Sans','Noto_Sans',sans-serif] text-[8.500px] leading-none">
      <h1 className="mt-[83.500px] ml-[1126px] h-[58.500px] w-[437px] bg-[#ff544d] pl-[45px] font-['Noto_Sans',sans-serif] text-[52px] leading-[60px] font-bold text-white italic">
        <T w={367}>estilos de capa</T>
      </h1>
      <p className="mt-[11px] ml-[526px] flex h-[60px] flex-col items-start font-['Noto_Sans',sans-serif] text-[24px] leading-[30px] text-[#2b3563]">
        <T w={177}>Modificar estilo</T>
        <T w={87}>de capa</T>
      </p>

      <section className="mt-[35px] ml-[175px] w-[1400px]">
        <div className="flex h-[20px] items-center pt-[1px] pr-[15px] pl-[1px] text-[#888]">
          <Ic n="qgis" /><T w={102} c="ml-[3px] pt-[2px]">*Proyecto sin título - QGIS</T>
          <span className="ml-auto flex items-center gap-[26px]">
            <span className="h-px w-[7px] bg-[#888]" />
            <svg viewBox="0 0 8 8" className="size-[7px]"><path d="M0 2.500h5.500V8M0 7.500h5.500M2 .5h5.500V6" fill="none" stroke="#999" /></svg>
            <svg viewBox="0 0 8 8" className="size-[7px]"><path d="M0 0l8 8M8 0L0 8" stroke="#888" /></svg>
          </span>
        </div>
        <nav className="flex h-[14px] items-center gap-[10px] bg-[#efefef] pl-[7px] text-[#999]">
          {MENU.map(([m, w]) => <T key={m} w={w}>{m}</T>)}
        </nav>
        <div className="h-[23px] border-b border-[#b5b5b5] bg-linear-to-b from-[#fafafa] to-[#ededed]">
          <div className="-ml-[3px] flex h-full items-center">
            <Bar items="| page folder save saveas layout manager style | hand pan zin zout zgray extent zsel zlayer zlast znext newmap bookm books refresh | identify action V select v selval v desel table abacus gear sigma measure v tip text v" />
          </div>
        </div>
        <div className="h-[23px] border-b border-[#b5b5b5] bg-linear-to-b from-[#fafafa] to-[#ededed]">
          <div className="-ml-[3px] flex h-full items-center">
            <Bar items="| src gpkgadd vecY featY chip | pens pencil gsave gblob gcross v gedit trash cut copy paste undo redo | abc diag abcmap gtag gtag2 gtag gtag2 gtag | bino | python | help | | tri gblob2 v gblob2 gblob gblob2 gtag gblob2 gblob2 gblob gblob gblob gblob2 gtag2 gblob2 gblob gcross undo V" />
          </div>
        </div>

        <div className="flex h-[661px] bg-[#efefef]">
          <div className="flex w-[31px] shrink-0 flex-col bg-linear-to-r from-[#fafafa] to-[#ededed] pt-[3px]">
            <span className="mb-[2px] ml-[11px] h-[3px] w-[12px] border-y border-dotted border-[#c8c8c8]" />
            {STRIP.map(([n, a], i) => (
              <span key={i} className="flex h-[17.500px] items-center pl-[5.500px]">
                <Ic n={n} c="size-[11px]" />
                {a && <span className="ml-[5.500px]"><Arrow /></span>}
              </span>
            ))}
          </div>
          <div className="flex w-[292px] shrink-0 flex-col border-l border-[#b5b5b5]">
            <PanelHead title="Navegador" w={42} />
            <div className="flex h-[22px] items-center pb-px pl-[2.500px]"><Bar items="addlay refresh funnel tree info" /></div>
            <div className="h-[288px] w-[287px] border border-l-0 border-[#b5b5b5] bg-white pt-[1px]">
              {TREE.map(([n, t, w, a]) => (
                <div key={t} className="flex h-[13.130px] items-center pl-[7px]">
                  <span className="w-[11px]">
                    {a && <svg viewBox="0 0 4 6" className="h-[5px] w-[3px]"><path d="M0 0l4 3-4 3z" fill="#777" /></svg>}
                  </span>
                  <Ic n={n} c="size-[11px]" />
                  <T w={w} c="ml-[4.500px] text-black">{t}</T>
                </div>
              ))}
            </div>
            <div className="mt-[4px]"><PanelHead title="Capas" w={23} /></div>
            <div className="flex h-[22px] items-center pl-[2.500px]"><Bar items="brush group eye funnel eps v expand tree remove" /></div>
            <div className="w-[287px] flex-1 border border-l-0 border-[#b5b5b5] bg-white">
              <div className="flex h-[13.500px] items-center bg-[#efefef] pl-[18px]">
                <Check on />
                <span className="ml-[4px] size-[12px] border border-[#74397a] bg-[#8f4a93]" />
                <T w={38} c="ml-[4px] border-b border-black pt-px font-bold text-black">BARRIOS</T>
              </div>
            </div>
          </div>
          <MapView />
        </div>

        <footer className="flex h-[20px] items-center bg-[#efefef] pt-px pr-[5px] pl-[3px] text-[#111] [&_.lbl]:pt-[1.500px]">
          <span className="flex h-[16px] w-[186px] items-center rounded-[2px] border border-[#b0b0b0] bg-white pl-[6px] text-[#777]">
            <Ic n="search" c="size-[9px]" /><T w={104} c="ml-[4px]">Escriba para localizar (Ctrl+K)</T>
          </span>
          <T w={37} c="ml-[5px]">Preparado</T>
          <span className="ml-auto flex items-center">
            <T w={43} c="mr-[4px]">Coordenada</T>
            <span className="flex h-[15px] w-[66px] items-center border border-[#b5b5b5] bg-[#fafafa] pl-[2px]"><T w={60}>412077,4470225</T></span>
            <Ic n="mapCoord" c="mr-[9px] ml-[4px] size-[10px]" />
            <T w={22} c="mr-[3px]">Escala</T>
            <Combo c="h-[15px] w-[58px] pl-[2px]"><T w={35}>1:164063</T></Combo>
            <Ic n="padlock" c="mr-[5px] ml-[10px] size-[10px]" />
            <T w={41} c="mr-[4px]">Amplificador</T>
            <Spin c="h-[15px] w-[63px]"><T w={21}>100%</T><span className="ml-auto" /></Spin>
            <T w={31} c="mr-[8px] ml-[6px]">Rotación</T>
            <Spin c="h-[15px] w-[60px]"><T w={18}>0,0 °</T><span className="ml-auto" /></Spin>
            <Check on c="ml-[5px] size-[10px]" /><T w={44} c="ml-[3px]">Representar</T>
            <Ic n="crs" c="mr-[3px] ml-[13px] size-[11px]" /><T w={40}>EPSG:3042</T>
            <Ic n="msg" c="ml-[13px] size-[12px]" />
          </span>
        </footer>
      </section>

      <svg viewBox="0 0 50 242" className="absolute top-[225px] left-[525.500px] h-[242px] w-[50px]">
        <path d="M4.500 0v232H46M37 224l9.500 8-9.500 8" fill="none" stroke="#2b3563" strokeWidth="1.800" />
      </svg>
    </main>
  );
}
